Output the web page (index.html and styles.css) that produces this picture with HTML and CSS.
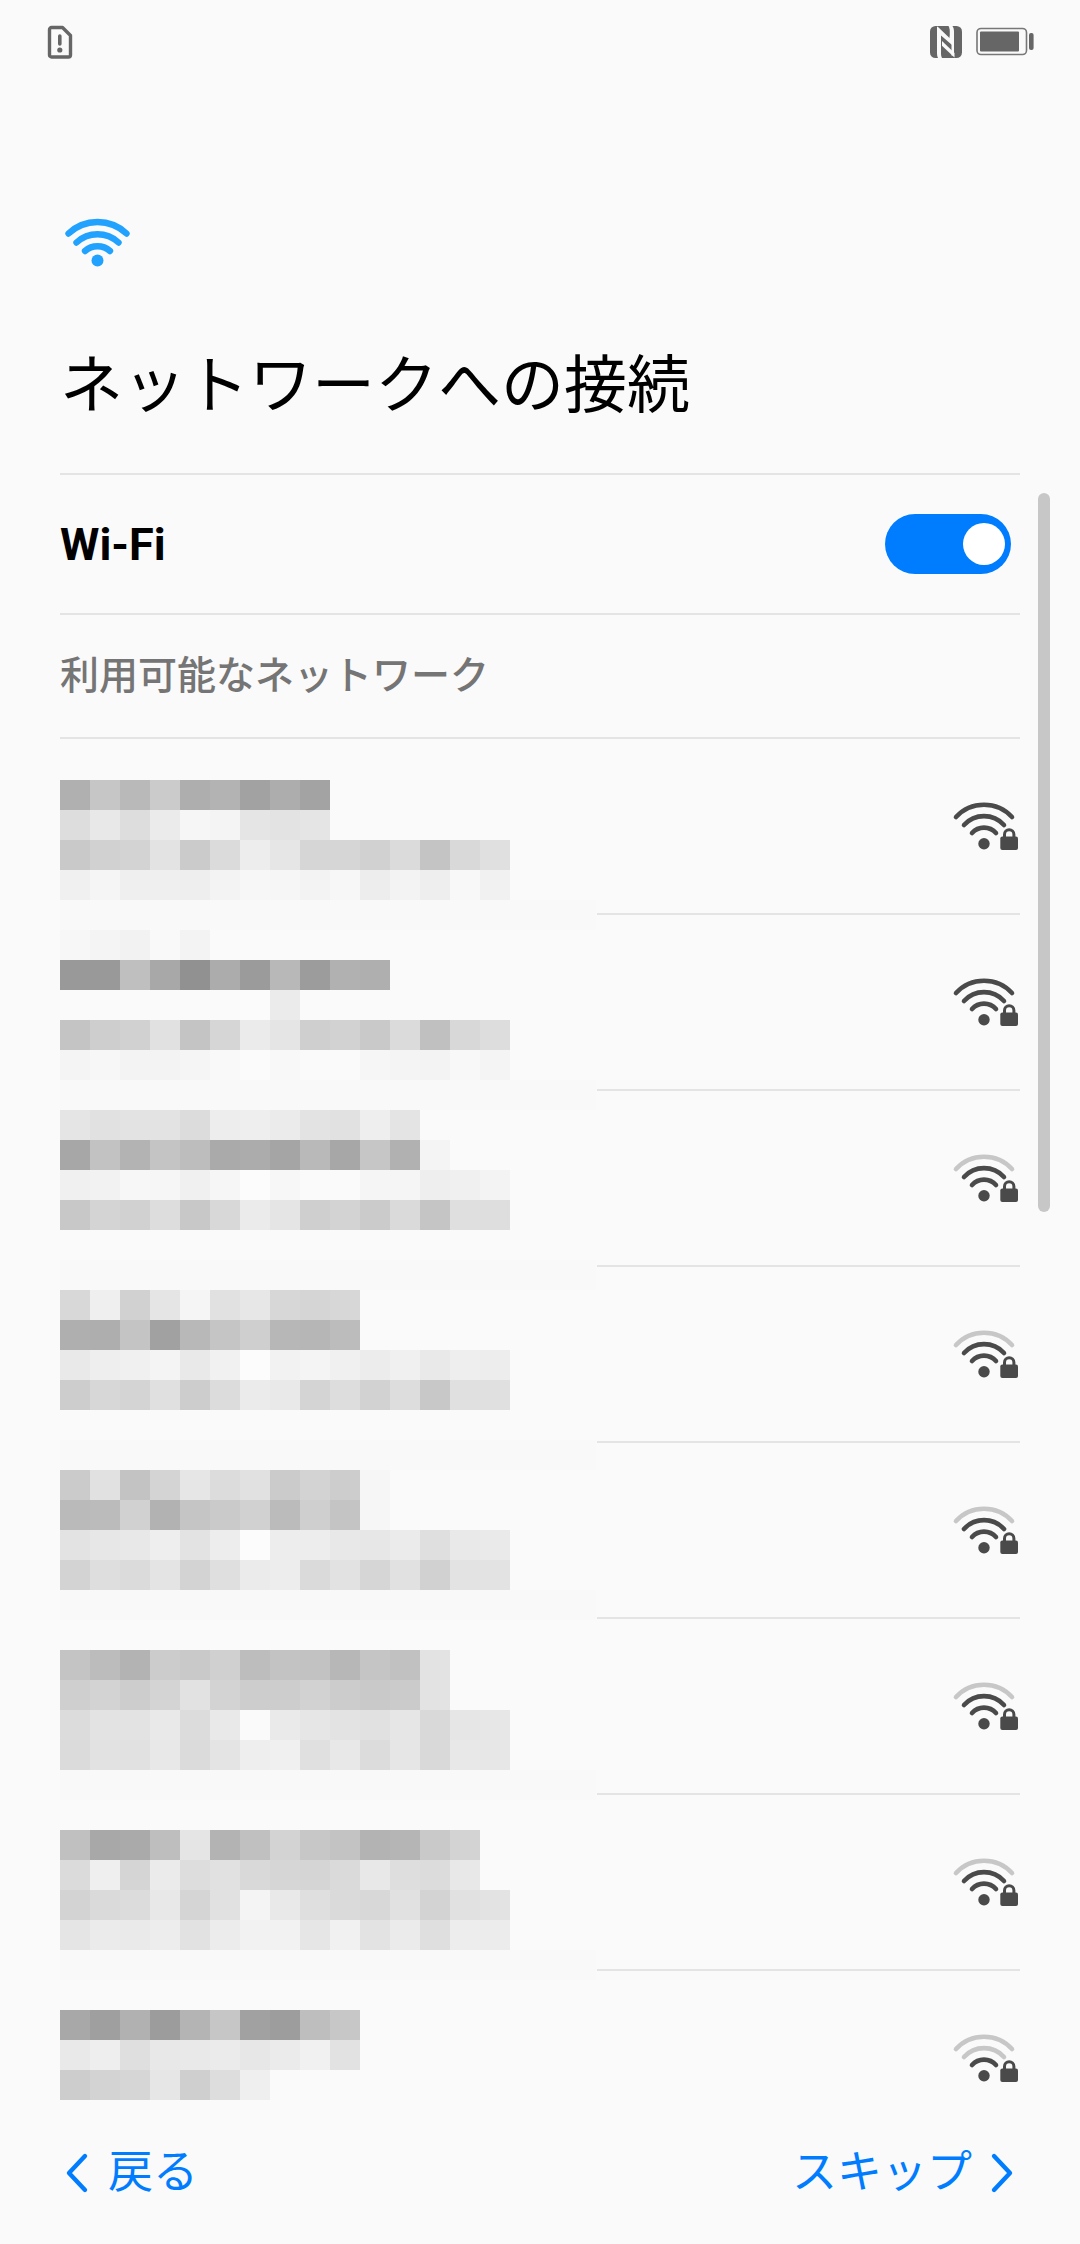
FILE: index.html
```html
<!DOCTYPE html>
<html lang="ja">
<head>
<meta charset="utf-8">
<meta name="viewport" content="width=device-width, initial-scale=1">
<title>ネットワークへの接続</title>
<link rel="stylesheet" href="styles.css">
</head>
<body>
<svg class="symbols" aria-hidden="true">
  <symbol id="signal" viewBox="0 0 68 52">
    <path class="arc arc-outer" d="M4 17A38 38 0 0 1 60 17"/>
    <path class="arc arc-middle" d="M12 25A27 27 0 0 1 52 25"/>
    <path class="arc arc-inner" d="M20 33A16 16 0 0 1 44 33"/>
    <circle class="solid" cx="32" cy="43.700" r="5.700"/>
    <path class="shackle" d="M52.500 38V34.500a4.700 4.700 0 0 1 9.400 0V38"/>
    <rect class="solid" x="48.300" y="36.500" width="17.700" height="13.500" rx="2"/>
  </symbol>
</svg>

<div class="status-bar">
  <svg class="sim" viewBox="0 0 26 34" role="img" aria-label="SIM">
    <path d="M4.500 2.500H15.500L23.500 10.500V30a2 2 0 0 1-2 2H4.500a2 2 0 0 1-2-2V4.500a2 2 0 0 1 2-2z" fill="none" stroke="#666" stroke-width="3.400" stroke-linejoin="round"/>
    <path d="M12.800 11v8" stroke="#666" stroke-width="3.600" stroke-linecap="round"/>
    <circle cx="12.800" cy="25" r="2.600" fill="#666"/>
  </svg>
  <div class="status-right">
    <svg class="nfc" viewBox="0 0 32 32" role="img" aria-label="NFC">
      <rect width="32" height="32" rx="5.500" fill="#666"/>
      <path d="M7.500 0.500L19.500 12V3.500Q19.500 1 18.500 0H22.500Q23.800 2 23.800 5V20.500L11 9.500V28Q11 30.500 12 32H8Q7 30.500 7 27.500V1z" fill="#fafafa"/>
      <path d="M9.500 1H17Q19.500 1.500 19.500 5V10.500z" fill="#666"/>
      <path d="M12 15L24.500 27V31.500L12 19.800z" fill="#fafafa"/>
      <path d="M21.500 12V29.500H24V6L23 1H21.500z" fill="#fafafa"/>
    </svg>
    <svg class="battery" viewBox="0 0 60 30" role="img" aria-label="Battery">
      <rect x="1" y="1.500" width="49.500" height="26" rx="4" fill="none" stroke="#777" stroke-width="1.600"/>
      <rect x="4" y="4.500" width="39" height="20" rx="1" fill="#666"/>
      <rect x="53" y="6" width="4.600" height="17" rx="2" fill="#666"/>
    </svg>
  </div>
</div>

<header class="page-header">
  <svg class="wifi-logo" viewBox="0 0 66 52" aria-hidden="true">
    <g fill="none" stroke="#22a2ff" stroke-width="6.400" stroke-linecap="round">
      <path d="M3.500 16.500A42.300 42.300 0 0 1 61.500 16.500"/>
      <path d="M11.500 25.500A31 31 0 0 1 53.500 25.500"/>
      <path d="M20 34A19 19 0 0 1 45 34"/>
    </g>
    <circle cx="32.500" cy="43.500" r="6" fill="#22a2ff"/>
  </svg>
  <h1>ネットワークへの接続</h1>
</header>

<main class="scroll-area">
  <label class="wifi-row" for="wifi">
    <span>Wi-Fi</span>
    <input class="switch" id="wifi" type="checkbox" role="switch" checked>
  </label>
  <h2>利用可能なネットワーク</h2>
  <div class="networks">
    <ul>
      <li><button class="network" aria-label="Wi-Fi 1"><svg class="signal level-4"><use href="#signal"/></svg></button></li>
      <li><button class="network" aria-label="Wi-Fi 2"><svg class="signal level-4"><use href="#signal"/></svg></button></li>
      <li><button class="network" aria-label="Wi-Fi 3"><svg class="signal level-3"><use href="#signal"/></svg></button></li>
      <li><button class="network" aria-label="Wi-Fi 4"><svg class="signal level-3"><use href="#signal"/></svg></button></li>
      <li><button class="network" aria-label="Wi-Fi 5"><svg class="signal level-3"><use href="#signal"/></svg></button></li>
      <li><button class="network" aria-label="Wi-Fi 6"><svg class="signal level-3"><use href="#signal"/></svg></button></li>
      <li><button class="network" aria-label="Wi-Fi 7"><svg class="signal level-3"><use href="#signal"/></svg></button></li>
      <li><button class="network" aria-label="Wi-Fi 8"><svg class="signal level-2"><use href="#signal"/></svg></button></li>
    </ul>
    <svg class="mosaic" id="mosaic" viewBox="0 0 537 1320" shape-rendering="crispEdges" aria-hidden="true"></svg>
  </div>
  <div class="scroll-thumb"></div>
</main>

<nav class="footer">
  <button class="nav-button">
    <svg class="chevron" viewBox="0 0 26 44" aria-hidden="true"><path d="M21 5L5 22L21 39"/></svg>
    <span>戻る</span>
  </button>
  <button class="nav-button">
    <span>スキップ</span>
    <svg class="chevron" viewBox="0 0 26 44" aria-hidden="true"><path d="M4 5L20 22L4 39"/></svg>
  </button>
</nav>
<script src="mosaic.js"></script>
</body>
</html>
```
FILE: styles.css
```css
* {
  box-sizing: border-box;
}

body {
  margin: 0;
  height: 100vh;
  display: flex;
  flex-direction: column;
  background: #fafafa;
  color: #000;
  font-family: Roboto, "Noto Sans CJK JP", sans-serif;
}

button {
  border: 0;
  padding: 0;
  background: none;
  font: inherit;
  color: inherit;
}

svg {
  display: block;
  flex: none;
}

.symbols {
  position: absolute;
  width: 0;
  height: 0;
}

.status-bar {
  flex: none;
  height: 84px;
  padding: 0 44px 0 47px;
  display: flex;
  align-items: center;
  justify-content: space-between;
}

.status-right {
  display: flex;
  align-items: center;
  gap: 14px;
}

.sim {
  width: 26px;
  height: 34px;
}

.nfc {
  width: 32px;
  height: 32px;
}

.battery {
  width: 60px;
  height: 30px;
}

.page-header {
  flex: none;
  margin: 0 60px;
  padding: 133px 0 45px;
  border-bottom: 2px solid #e4e4e4;
}

.wifi-logo {
  width: 66px;
  height: 52px;
  margin: 0 5px 75px;
}

h1 {
  margin: 0;
  font-size: 63px;
  line-height: 84px;
  font-weight: 400;
}

.scroll-area {
  position: relative;
  flex: 1;
  min-height: 0;
  padding: 0 60px;
  overflow: hidden;
}

.wifi-row {
  display: flex;
  align-items: center;
  justify-content: space-between;
  height: 140px;
  padding-right: 9px;
  border-bottom: 2px solid #e4e4e4;
  font-size: 45px;
  font-weight: 700;
}

.switch {
  appearance: none;
  display: flex;
  align-items: center;
  justify-content: flex-end;
  width: 126px;
  height: 60px;
  margin: 0;
  padding: 6px;
  border-radius: 30px;
  background: #007dff;
}

.switch::before {
  content: "";
  width: 42px;
  height: 42px;
  border-radius: 50%;
  background: #fff;
}

h2 {
  margin: 0;
  border-bottom: 2px solid #e4e4e4;
  font-size: 39px;
  line-height: 122px;
  font-weight: 500;
  color: #757575;
}

.networks {
  position: relative;
}

ul {
  margin: 0;
  padding: 0;
  list-style: none;
}

.network {
  display: flex;
  align-items: center;
  justify-content: flex-end;
  width: 100%;
  height: 176px;
  border-bottom: 2px solid #e4e4e4;
}

.signal {
  width: 68px;
  height: 52px;
  --outer: #4a4a4a;
  --middle: #4a4a4a;
}

.level-3 {
  --outer: #c7c7c7;
}

.level-2 {
  --outer: #c7c7c7;
  --middle: #c7c7c7;
}

.arc,
.shackle {
  fill: none;
  stroke: #4a4a4a;
  stroke-width: 4.6;
}

.arc {
  stroke-linecap: round;
}

.arc-outer {
  stroke: var(--outer);
}

.arc-middle {
  stroke: var(--middle);
}

.shackle {
  stroke-width: 3;
}

.solid {
  fill: #4a4a4a;
}

.mosaic {
  position: absolute;
  left: 0;
  top: 41px;
  width: 537px;
  height: 1320px;
  background: #fafafa;
}

.scroll-thumb {
  position: absolute;
  top: 18px;
  right: 30px;
  width: 12px;
  height: 719px;
  border-radius: 6px;
  background: #c7c7c7;
}

.footer {
  flex: none;
  display: flex;
  align-items: center;
  justify-content: space-between;
  height: 144px;
  padding: 2px 64px 0;
}

.nav-button {
  display: flex;
  align-items: center;
  gap: 18px;
  font-size: 45px;
  line-height: 60px;
  color: #007dff;
}

.chevron {
  width: 26px;
  height: 44px;
  fill: none;
  stroke: #007dff;
  stroke-width: 4.4;
  stroke-linecap: round;
  stroke-linejoin: round;
}
```
FILE: mosaic.js
```
// Grey levels of the cells that hide the network names, one string per row.
// "band" is a faint strip across the full width, "" an empty row.
const rows = [
  "b0 c6 b9 cb ae b3 a2 ad a3",
  "dd e8 dd eb f6 f4 e5 e3 e5",
  "c9 d1 d3 e3 cb db ed e6 d6 d6 d1 db c4 d9 e0",
  "f0 f5 ef ef ee f3 f7 f6 f3 f7 ed f3 ee f8 f1",
  "band",
  "f7 f4 f2 f9 f3",
  "99 99 bf a8 91 ac 9b b8 9c b1 af",
  "fa fa fa fa fa fa fb eb",
  "c4 ce d1 e1 c4 d6 eb e5 cf d2 c9 db c0 d8 dd",
  "f4 f7 f3 f3 f5 f9 fb f8 fa fa f6 f4 f3 f8 f4",
  "band",
  "e5 e1 e3 e3 dc ed ee eb e3 e1 ee e4",
  "a7 c2 b3 c4 bd aa ac a5 b9 a7 c6 b1 f4",
  "f0 f2 f7 f6 f0 f6 fc f7 fa fa f5 f5 ee f0 f3",
  "c8 d4 d1 dd c8 d8 eb e5 cf d3 cb da c5 df de",
  "",
  "band",
  "d8 ef d1 e5 f5 e1 e7 d7 d5 d7",
  "af ae c4 a1 b8 c5 cf b7 b6 bc",
  "e9 ee f0 f4 e9 f1 fc f2 f4 f0 ec f0 e9 ee ed",
  "cd d7 d4 e0 cd dc eb e9 d4 dd d2 dd c8 e0 e0",
  "",
  "band",
  "cb e1 c3 d4 e6 dc e1 cb d3 cd f6",
  "ba bb d1 b2 c5 ca d1 bb cf c4 f6",
  "e3 e7 e8 ee e3 ed fc ed ed e8 e7 eb df e9 ea",
  "d3 de db e4 d3 df eb ed da e2 d6 e1 d1 e3 e3",
  "band",
  "",
  "c4 bc b3 cc c9 d0 bd c3 c2 b7 c5 c1 e3",
  "cf d3 cd d4 e2 d3 cd cd d2 cc c9 cb e3",
  "dc e3 e3 e9 dc e9 fa ea e6 e3 e1 e6 d9 e6 e7",
  "db e2 e1 e8 db e4 ee f0 e0 e8 dc e6 d9 e8 e7",
  "band",
  "",
  "c0 a8 aa be e5 b3 c0 d3 c7 c3 b3 b5 c9 d3",
  "db ef d5 eb dd e1 d9 d6 d5 da e8 de dc e8",
  "d3 da dc e8 d5 e1 f4 e9 df da d8 e1 d3 e1 e3",
  "e5 eb ea ed e2 ec f2 f2 e6 f1 e3 eb df ed ec",
  "band",
  "",
  "a8 9f b1 9c b4 c6 a1 9d be c7",
  "e9 ee df e8 e9 eb e7 eb f1 e2",
  "cd d3 d6 e6 cf dd ef"
];

const cell = 30;
const mosaic = document.getElementById("mosaic");

function addRect(x, y, width, grey) {
  const rect = document.createElementNS("http://www.w3.org/2000/svg", "rect");
  rect.setAttribute("x", x);
  rect.setAttribute("y", y);
  rect.setAttribute("width", width);
  rect.setAttribute("height", cell);
  rect.setAttribute("fill", "#" + grey.repeat(3));
  mosaic.appendChild(rect);
}

rows.forEach((row, r) => {
  if (row === "band") {
    addRect(0, r * cell, 536, "f9");
  } else if (row) {
    row.split(" ").forEach((grey, c) => addRect(c * cell, r * cell, cell, grey));
  }
});
```
